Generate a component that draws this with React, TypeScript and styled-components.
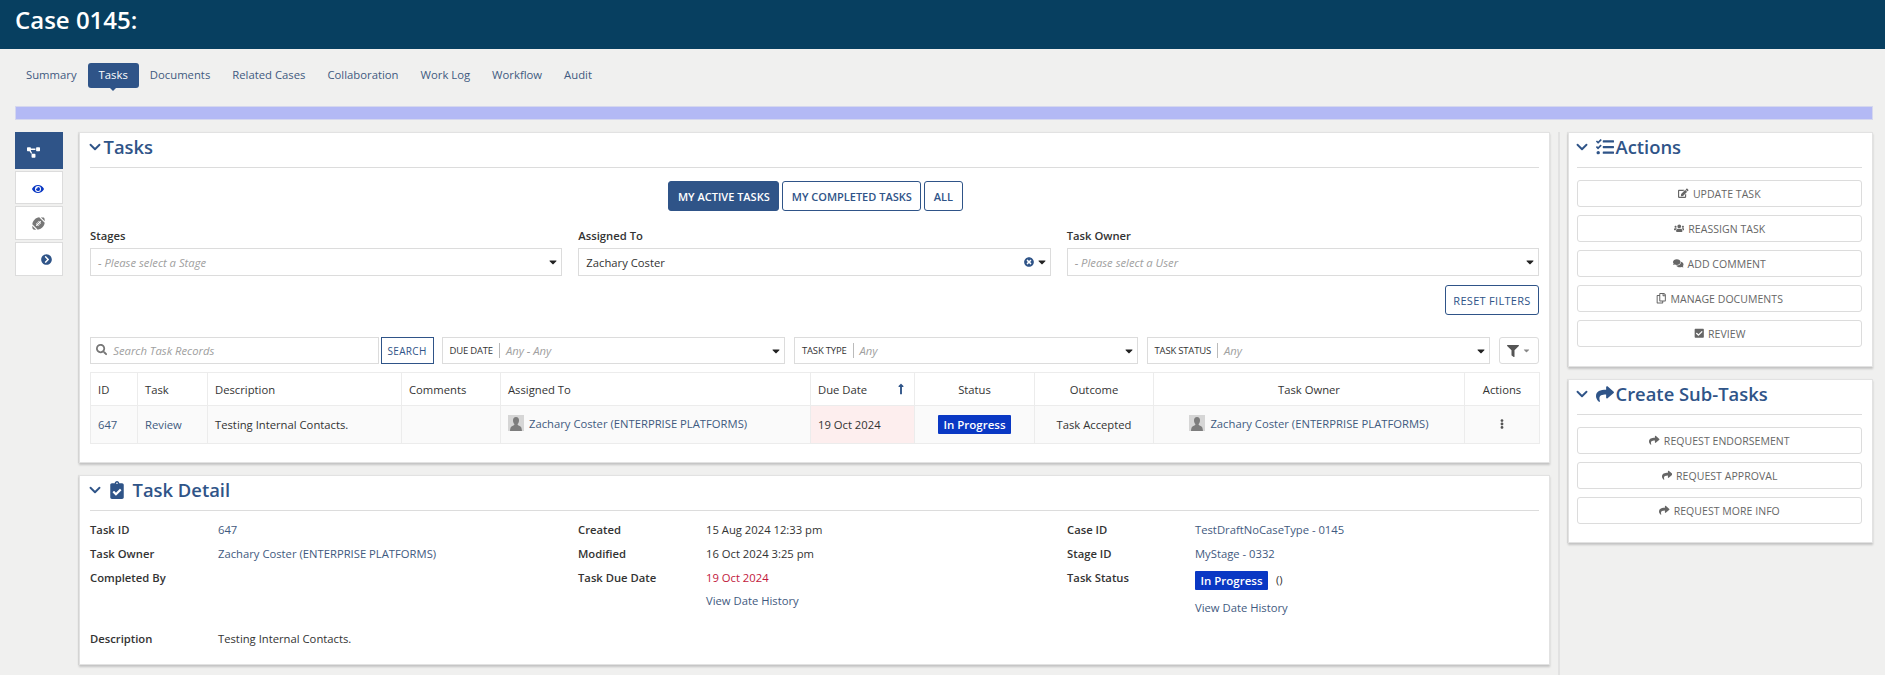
import React from "react";
import styled, { createGlobalStyle } from "styled-components";
import {
  FaCaretDown,
  FaCheckSquare,
  FaChevronCircleRight,
  FaClipboardCheck,
  FaComments,
  FaEdit,
  FaEllipsisV,
  FaEye,
  FaFilter,
  FaFootballBall,
  FaLongArrowAltUp,
  FaProjectDiagram,
  FaRegCopy,
  FaSearch,
  FaShare,
  FaTasks,
  FaTimesCircle,
  FaUsers,
} from "react-icons/fa";
import { FiChevronDown } from "react-icons/fi";

const NAVY = "#2f5488";
const LINK = "#3f5a80";
const LINE = "#dcdcdc";

const GlobalStyle = createGlobalStyle`
  html, body {
    margin: 0;
    height: 675px;
    overflow: hidden;
    background: #f0f0ef;
    font-family: "Open Sans", "Liberation Sans", sans-serif;
    font-size: 11.25px;
    color: #333;
  }
  * { box-sizing: border-box; }
`;

const Header = styled.header`
  height: 49px;
  background: #073f60;
  color: #fff;
  font-size: 24px;
  font-weight: 600;
  line-height: 39px;
  padding-left: 15px;
`;

const TabBar = styled.nav`
  display: flex;
  padding: 14px 0 0 15px;
  height: 57px;
`;

const Tab = styled.a<{ $active?: boolean }>`
  position: relative;
  height: 25px;
  line-height: 24px;
  padding: 0 11px;
  font-size: 11.3px;
  border-radius: 3px;
  color: ${(p) => (p.$active ? "#fff" : LINK)};
  background: ${(p) => (p.$active ? NAVY : "transparent")};

  &::after {
    content: "";
    display: ${(p) => (p.$active ? "block" : "none")};
    position: absolute;
    left: 50%;
    bottom: -3px;
    margin-left: -3px;
    border-left: 3px solid transparent;
    border-right: 3px solid transparent;
    border-top: 3px solid ${NAVY};
  }
`;

const ProgressBar = styled.div`
  height: 14px;
  margin: 0 12px 0 15px;
  background: #b3b9f5;
  border: 1px solid #d5d7ee;
`;

const Body = styled.div`
  display: grid;
  grid-template-columns: 48px 1471px 316px;
  column-gap: 16px;
  padding: 12px 0 0 15px;
`;

const Rail = styled.div`
  display: flex;
  flex-direction: column;
  gap: 2px;
`;

const RailItem = styled.div<{ $active?: boolean; $pad: string; $h: number; $color: string; $size: number }>`
  height: ${(p) => p.$h}px;
  display: flex;
  align-items: center;
  justify-content: center;
  padding: ${(p) => p.$pad};
  background: ${(p) => (p.$active ? NAVY : "#fff")};
  border: 1px solid ${(p) => (p.$active ? NAVY : LINE)};
  color: ${(p) => p.$color};
  font-size: ${(p) => p.$size}px;
`;

const Column = styled.div`
  display: flex;
  flex-direction: column;
  gap: 12px;
`;

const SideColumn = styled(Column)`
  border-left: 2px solid #e2e2e2;
  padding-left: 8px;
  margin-left: -8px;
  margin-right: 9px;
  height: 543px;
`;

const Card = styled.section<{ $h: number }>`
  height: ${(p) => p.$h}px;
  background: #fff;
  padding: 0 10px;
  border: 1px solid #e2e2e2;
  box-shadow: 0 2px 2px rgba(0, 0, 0, 0.18), -1px 0 1px rgba(0, 0, 0, 0.06);
`;

const SideCard = styled(Card)`
  padding: 0 10px 0 8px;
`;

const CardTitle = styled.h2`
  margin: 0;
  height: 35px;
  padding-bottom: 7px;
  display: flex;
  align-items: center;
  border-bottom: 1px solid ${LINE};
  color: ${NAVY};
  font-size: 18.4px;
  font-weight: 600;
  white-space: nowrap;
`;

const Chevron = styled(FiChevronDown)`
  font-size: 18px;
  stroke-width: 2.5px;
  margin-left: -4.5px;
  flex: none;
`;

const TitleIcon = styled.span<{ $left: number; $right: number }>`
  display: flex;
  font-size: 18px;
  margin: 0 ${(p) => p.$right}px 0 ${(p) => p.$left}px;
`;

const ToggleRow = styled.div`
  display: flex;
  justify-content: center;
  gap: 3px;
  margin-top: 13px;
  padding-left: 2px;
`;

const Toggle = styled.button<{ $on?: boolean }>`
  height: 30px;
  padding: 0 8.5px;
  border: 1px solid ${NAVY};
  border-radius: 3px;
  background: ${(p) => (p.$on ? NAVY : "#fff")};
  color: ${(p) => (p.$on ? "#fff" : NAVY)};
  font: 600 11px "Open Sans", sans-serif;
`;

const FilterGrid = styled.div`
  display: grid;
  grid-template-columns: repeat(3, 1fr);
  column-gap: 16px;
  margin-top: 17px;
`;

const FieldLabel = styled.div`
  font-weight: 600;
  color: #333;
  height: 20px;
  line-height: 15px;
`;

const SelectBox = styled.div`
  height: 28px;
  display: flex;
  align-items: center;
  padding: 0 2px 0 7px;
  border: 1px solid ${LINE};
  background: #fff;
  color: #333;
`;

const Placeholder = styled.span`
  color: #a0a0a0;
  font-style: italic;
  flex: 1;
`;

const SelectedText = styled.span`
  flex: 1;
`;

const ClearIcon = styled(FaTimesCircle)`
  color: ${NAVY};
  font-size: 10px;
  margin-right: 2px;
`;

const Caret = styled(FaCaretDown)`
  color: #222;
  font-size: 12px;
  flex: none;
`;

const ResetRow = styled.div`
  display: flex;
  justify-content: flex-end;
  margin-top: 9px;
`;

const ResetButton = styled.button`
  width: 94px;
  height: 30px;
  border: 1px solid ${NAVY};
  border-radius: 3px;
  background: #fff;
  color: ${NAVY};
  font: 400 11px "Open Sans", sans-serif;
  letter-spacing: 0.3px;
`;

const SearchRow = styled.div`
  display: flex;
  margin-top: 22px;
  height: 27px;
`;

const SearchInput = styled.div`
  width: 289px;
  display: flex;
  align-items: center;
  gap: 6px;
  padding: 0 5px 1px;
  border: 1px solid ${LINE};
  color: #777;
`;

const SearchButton = styled.button`
  width: 53px;
  margin: 0 8px 0 2px;
  padding: 0;
  border: 1px solid ${NAVY};
  background: #fff;
  color: ${NAVY};
  font: 400 10px "Open Sans", sans-serif;
  letter-spacing: 0.3px;
`;

const RangeFilter = styled.div`
  width: 344px;
  margin-right: 9px;
  display: flex;
  align-items: center;
  padding: 0 2px 0 7px;
  border: 1px solid ${LINE};
`;

const RangeName = styled.span`
  font-size: 9.5px;
  letter-spacing: -0.2px;
  color: #333;
  padding-right: 6px;
  margin-right: 6px;
  border-right: 1px solid #bbb;
  line-height: 15px;
`;

const FilterButton = styled.div`
  width: 40px;
  display: flex;
  align-items: center;
  justify-content: center;
  gap: 3px;
  border: 1px solid ${LINE};
  border-radius: 3px;
  color: #555;
  font-size: 12px;
`;

const Table = styled.table`
  width: 100%;
  margin-top: 8px;
  border-collapse: collapse;
  table-layout: fixed;
`;

const Col = styled.col<{ $w: number }>`
  width: ${(p) => p.$w}px;
`;

const Th = styled.th<{ $center?: boolean }>`
  height: 33px;
  padding: 0 7px;
  border: 1px solid #ececec;
  font-weight: 400;
  text-align: ${(p) => (p.$center ? "center" : "left")};
  color: #333;
`;

const Td = styled.td<{ $center?: boolean; $late?: boolean }>`
  height: 38px;
  padding: 0 7px;
  border: 1px solid #ececec;
  background: ${(p) => (p.$late ? "#fdeeee" : "#fafafa")};
  text-align: ${(p) => (p.$center ? "center" : "left")};
  white-space: nowrap;
`;

const SortHead = styled.div`
  display: flex;
  justify-content: space-between;
  align-items: center;
`;

const SortArrow = styled(FaLongArrowAltUp)`
  color: ${NAVY};
  font-size: 12px;
`;

const DotsIcon = styled(FaEllipsisV)`
  color: #555;
  font-size: 10px;
`;

const Link = styled.a`
  color: ${LINK};
`;

const Person = styled.span`
  display: inline-flex;
  align-items: center;
  gap: 5px;
  color: ${LINK};
`;

const Avatar = styled.svg`
  width: 16px;
  height: 16px;
  flex: none;
  display: block;
`;

const Badge = styled.span`
  display: inline-block;
  padding: 0 5.5px;
  height: 19px;
  line-height: 19px;
  border-radius: 1px;
  background: #0a38c4;
  color: #fff;
  font-weight: 600;
  font-size: 11.5px;
`;

const DetailGrid = styled.div`
  display: grid;
  grid-template-columns: 128px 360px 128px 361px 128px 1fr;
  grid-template-rows: 24px 24px auto;
  margin-top: 7px;
  height: 109px;
`;

const DetailLabel = styled.div`
  font-weight: 600;
  line-height: 24px;
`;

const DetailValue = styled.div`
  line-height: 24px;
  color: #333;
`;

const LateText = styled.span`
  color: #c2183c;
`;

const HistoryLink = styled(Link)`
  display: block;
  margin-top: -1px;
`;

const StatusLine = styled.div`
  display: flex;
  align-items: center;
  gap: 8px;
  height: 24px;
  margin-top: 2px;
`;

const StatusHistory = styled(Link)`
  display: block;
  margin-top: 4px;
`;

const DescriptionRow = styled.div`
  display: grid;
  grid-template-columns: 128px 1fr;
`;

const ActionList = styled.div`
  display: flex;
  flex-direction: column;
  gap: 8px;
  margin-top: 12px;
`;

const ActionButton = styled.button`
  height: 27px;
  display: flex;
  align-items: center;
  justify-content: center;
  gap: 4px;
  border: 1px solid ${LINE};
  border-radius: 3px;
  background: #fff;
  color: #666;
  font: 400 10.5px "Open Sans", sans-serif;
  letter-spacing: 0.05px;
`;

const columns = [47, 70, 194, 99, 310, 104, 120, 119, 311, 75];

const Silhouette = () => (
  <Avatar viewBox="0 0 16 16">
    <rect width="16" height="16" fill="#d6d6d6" />
    <path d="M8 2c-2 0-3 1.500-3 3.400 0 1.500.6 2.800 1.400 3.600 0 1-.6 1.400-2 2C3 11.600 2.300 12.400 2 16h12c-.3-3.600-1-4.400-2.400-5-1.400-.6-2-1-2-2C10.400 8.200 11 6.900 11 5.400 11 3.500 10 2 8 2z" fill="#7d7d7d" />
  </Avatar>
);

const actions = [
  { label: "UPDATE TASK", icon: <FaEdit /> },
  { label: "REASSIGN TASK", icon: <FaUsers /> },
  { label: "ADD COMMENT", icon: <FaComments /> },
  { label: "MANAGE DOCUMENTS", icon: <FaRegCopy /> },
  { label: "REVIEW", icon: <FaCheckSquare /> },
];

const subTasks = ["REQUEST ENDORSEMENT", "REQUEST APPROVAL", "REQUEST MORE INFO"];
const tabs = ["Summary", "Tasks", "Documents", "Related Cases", "Collaboration", "Work Log", "Workflow", "Audit"];
const OWNER = "Zachary Coster (ENTERPRISE PLATFORMS)";

const App = () => (
  <>
    <GlobalStyle />
    <Header>Case 0145:</Header>
    <TabBar>
      {tabs.map((t) => (
        <Tab key={t} $active={t === "Tasks"}>{t}</Tab>
      ))}
    </TabBar>
    <ProgressBar />
    <Body>
      <Rail>
        <RailItem $active $h={37} $color="#fff" $size={13} $pad="4px 12px 0 0"><FaProjectDiagram /></RailItem>
        <RailItem $h={33} $color="#0a38c4" $size={12} $pad="3px 2px 0 0"><FaEye /></RailItem>
        <RailItem $h={34} $color="#777" $size={13} $pad="0 2px 0 0"><FaFootballBall /></RailItem>
        <RailItem $h={34} $color={NAVY} $size={11} $pad="0 0 0 15px"><FaChevronCircleRight /></RailItem>
      </Rail>

      <Column>
        <Card $h={331}>
          <CardTitle><Chevron />Tasks</CardTitle>
          <ToggleRow>
            <Toggle $on>MY ACTIVE TASKS</Toggle>
            <Toggle>MY COMPLETED TASKS</Toggle>
            <Toggle>ALL</Toggle>
          </ToggleRow>
          <FilterGrid>
            <div>
              <FieldLabel>Stages</FieldLabel>
              <SelectBox><Placeholder>- Please select a Stage</Placeholder><Caret /></SelectBox>
            </div>
            <div>
              <FieldLabel>Assigned To</FieldLabel>
              <SelectBox><SelectedText>Zachary Coster</SelectedText><ClearIcon /><Caret /></SelectBox>
            </div>
            <div>
              <FieldLabel>Task Owner</FieldLabel>
              <SelectBox><Placeholder>- Please select a User</Placeholder><Caret /></SelectBox>
            </div>
          </FilterGrid>
          <ResetRow><ResetButton>RESET FILTERS</ResetButton></ResetRow>
          <SearchRow>
            <SearchInput><FaSearch /><Placeholder>Search Task Records</Placeholder></SearchInput>
            <SearchButton>SEARCH</SearchButton>
            <RangeFilter><RangeName>DUE DATE</RangeName><Placeholder>Any - Any</Placeholder><Caret /></RangeFilter>
            <RangeFilter><RangeName>TASK TYPE</RangeName><Placeholder>Any</Placeholder><Caret /></RangeFilter>
            <RangeFilter><RangeName>TASK STATUS</RangeName><Placeholder>Any</Placeholder><Caret /></RangeFilter>
            <FilterButton><FaFilter /><FaCaretDown size={9} color="#888" /></FilterButton>
          </SearchRow>
          <Table>
            <colgroup>
              {columns.map((w, i) => <Col key={i} $w={w} />)}
            </colgroup>
            <thead>
              <tr>
                <Th>ID</Th>
                <Th>Task</Th>
                <Th>Description</Th>
                <Th>Comments</Th>
                <Th>Assigned To</Th>
                <Th><SortHead>Due Date<SortArrow /></SortHead></Th>
                <Th $center>Status</Th>
                <Th $center>Outcome</Th>
                <Th $center>Task Owner</Th>
                <Th $center>Actions</Th>
              </tr>
            </thead>
            <tbody>
              <tr>
                <Td><Link>647</Link></Td>
                <Td><Link>Review</Link></Td>
                <Td>Testing Internal Contacts.</Td>
                <Td />
                <Td><Person><Silhouette />{OWNER}</Person></Td>
                <Td $late>19 Oct 2024</Td>
                <Td $center><Badge>In Progress</Badge></Td>
                <Td $center>Task Accepted</Td>
                <Td $center><Person><Silhouette />{OWNER}</Person></Td>
                <Td $center><DotsIcon /></Td>
              </tr>
            </tbody>
          </Table>
        </Card>

        <Card $h={190}>
          <CardTitle>
            <Chevron />
            <TitleIcon $left={4} $right={7}><FaClipboardCheck /></TitleIcon>
            Task Detail
          </CardTitle>
          <DetailGrid>
            <DetailLabel>Task ID</DetailLabel>
            <DetailValue><Link>647</Link></DetailValue>
            <DetailLabel>Created</DetailLabel>
            <DetailValue>15 Aug 2024 12:33 pm</DetailValue>
            <DetailLabel>Case ID</DetailLabel>
            <DetailValue><Link>TestDraftNoCaseType - 0145</Link></DetailValue>

            <DetailLabel>Task Owner</DetailLabel>
            <DetailValue><Link>{OWNER}</Link></DetailValue>
            <DetailLabel>Modified</DetailLabel>
            <DetailValue>16 Oct 2024 3:25 pm</DetailValue>
            <DetailLabel>Stage ID</DetailLabel>
            <DetailValue><Link>MyStage - 0332</Link></DetailValue>

            <DetailLabel>Completed By</DetailLabel>
            <DetailValue />
            <DetailLabel>Task Due Date</DetailLabel>
            <DetailValue>
              <LateText>19 Oct 2024</LateText>
              <HistoryLink>View Date History</HistoryLink>
            </DetailValue>
            <DetailLabel>Task Status</DetailLabel>
            <DetailValue>
              <StatusLine><Badge>In Progress</Badge>()</StatusLine>
              <StatusHistory>View Date History</StatusHistory>
            </DetailValue>
          </DetailGrid>
          <DescriptionRow>
            <DetailLabel>Description</DetailLabel>
            <DetailValue>Testing Internal Contacts.</DetailValue>
          </DescriptionRow>
        </Card>
      </Column>

      <SideColumn>
        <SideCard $h={235}>
          <CardTitle>
            <Chevron />
            <TitleIcon $left={5} $right={2}><FaTasks /></TitleIcon>
            Actions
          </CardTitle>
          <ActionList>
            {actions.map((a) => (
              <ActionButton key={a.label}>{a.icon}{a.label}</ActionButton>
            ))}
          </ActionList>
        </SideCard>
        <SideCard $h={164}>
          <CardTitle>
            <Chevron />
            <TitleIcon $left={5} $right={2}><FaShare /></TitleIcon>
            Create Sub-Tasks
          </CardTitle>
          <ActionList>
            {subTasks.map((s) => (
              <ActionButton key={s}><FaShare />{s}</ActionButton>
            ))}
          </ActionList>
        </SideCard>
      </SideColumn>
    </Body>
  </>
);

export default App;
